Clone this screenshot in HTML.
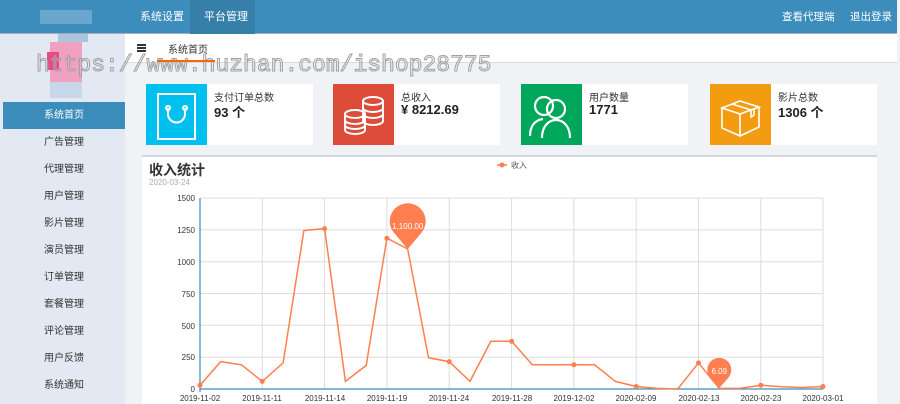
<!DOCTYPE html>
<html><head><meta charset="utf-8"><style>
*{margin:0;padding:0;box-sizing:border-box}
body{width:900px;height:404px;overflow:hidden;background:#f0f2f5;font-family:"Liberation Sans","Noto Sans CJK SC",sans-serif;position:relative}
.hd{position:absolute;left:0;top:0;width:897px;height:34px;background:#3c8dbc;border-bottom:1px solid #aab}
.hd span{position:absolute;top:0;line-height:34px;color:#fff;font-size:11px}
.side{position:absolute;left:0;top:34px;width:125px;height:370px;background:#e3e9f3}
.side div{position:absolute;left:3px;width:122px;height:27px;line-height:27px;text-align:center;font-size:10px;color:#333}
.side .on{background:#3c8dbc;color:#fff}
.tab{position:absolute;left:125px;top:34px;width:772px;height:29px;background:#fff;border-bottom:1px solid #ddd}
.card{position:absolute;top:84px;width:167px;height:61px;background:#fff}
.card .ic{position:absolute;left:0;top:0;width:61px;height:61px}
.card .t{position:absolute;left:68px;top:5px;font-size:10px;color:#333}
.card .n{position:absolute;left:68px;top:18px;font-size:13px;font-weight:bold;color:#222}
.wm{position:absolute;left:36px;top:52px;font-family:"Liberation Mono",monospace;font-size:23px;color:rgba(255,255,255,.15);-webkit-text-stroke:1px #a0a0a0;white-space:nowrap}
</style></head><body>
<div class="hd">
<div style="position:absolute;left:190px;top:0;width:65px;height:34px;background:#367fa9"></div>
<span style="left:140px">系统设置</span><span style="left:204px">平台管理</span>
<span style="left:782px;font-size:10.5px">查看代理端</span><span style="left:850px;font-size:10.5px">退出登录</span>
<div style="position:absolute;left:40px;top:10px;width:52px;height:14px;background:#7eb2d6;opacity:.7"></div>
</div>
<div class="side">
<div style="left:58px;top:0;width:30px;height:8px;background:#a9c6dc"></div>
<div style="left:50px;top:8px;width:32px;height:40px;background:#f0a0c0"></div>
<div style="left:47px;top:18px;width:12px;height:18px;background:#e84a85"></div>
<div style="left:50px;top:48px;width:32px;height:16px;background:#c8d8ea"></div>
<div class="on" style="top:68px">系统首页</div>
<div style="top:95px">广告管理</div>
<div style="top:122px">代理管理</div>
<div style="top:149px">用户管理</div>
<div style="top:176px">影片管理</div>
<div style="top:203px">演员管理</div>
<div style="top:230px">订单管理</div>
<div style="top:257px">套餐管理</div>
<div style="top:284px">评论管理</div>
<div style="top:311px">用户反馈</div>
<div style="top:338px">系统通知</div>
</div>
<div class="tab">
<div style="position:absolute;left:12px;top:10px;width:9px;height:1.5px;background:#333;box-shadow:0 3px 0 #333,0 6px 0 #333"></div>
<span style="position:absolute;left:43px;top:7px;font-size:10px;color:#333">系统首页</span>
</div>
<div class="card" style="left:146px"><div class="ic" style="background:#00c0ef"><svg width="61" height="61"><path d="M12 10H49V55H12Z M22 22a2 2 0 1 0 .1 0 M39 22a2 2 0 1 0 .1 0 M22 24v6a8.5 8.5 0 0 0 17 0v-6" fill="none" stroke="#fff" stroke-width="2"/></svg></div><div class="t">支付订单总数</div><div class="n">93 个</div></div>
<div class="card" style="left:333px"><div class="ic" style="background:#dd4b39"><svg width="61" height="61" fill="none" stroke="#fff" stroke-width="2"><ellipse cx="40" cy="17" rx="10" ry="4"/><path d="M30 17v20M50 17v20a10 4 0 0 1-20 0M30 24a10 4 0 0 0 20 0M30 30a10 4 0 0 0 20 0"/><ellipse cx="22" cy="30" rx="10" ry="4"/><path d="M12 30v16a10 4 0 0 0 20 0V30M12 36a10 4 0 0 0 20 0M12 41a10 4 0 0 0 20 0"/></svg></div><div class="t">总收入</div><div class="n">¥ 8212.69</div></div>
<div class="card" style="left:521px"><div class="ic" style="background:#00a65a"><svg width="61" height="61" fill="none" stroke="#fff" stroke-width="2.2"><circle cx="23" cy="22" r="9"/><circle cx="35" cy="25" r="9"/><path d="M9 52c0-10 5-16 13-17M21 54c0-11 6-18 14-18s14 7 14 18"/></svg></div><div class="t">用户数量</div><div class="n">1771</div></div>
<div class="card" style="left:710px"><div class="ic" style="background:#f39c12"><svg width="61" height="61" fill="none" stroke="#fff" stroke-width="1.6"><path d="M12 24L30 17 49 23 30 30ZM12 24v20l18 8V30M49 23v20l-19 9M22 20l19 6v7l3-2v-6"/></svg></div><div class="t">影片总数</div><div class="n">1306 个</div></div>
<div style="position:absolute;left:142px;top:155px;width:735px;height:249px;background:#fff;border-top:2px solid #d2d6de"></div>
<div style="position:absolute;left:149px;top:160px;font-size:14px;font-weight:bold;color:#333">收入统计</div>
<div style="position:absolute;left:149px;top:178px;font-size:8px;color:#aaa">2020-03-24</div>
<svg style="position:absolute;left:0;top:0" width="900" height="404" font-family="Liberation Sans" font-size="8" fill="#333">
<g stroke="#ddd" stroke-width="1">
<path d="M200 198H823M200 229.9H823M200 261.7H823M200 293.5H823M200 325.3H823M200 357.2H823"/>
<path d="M262.3 198V389M324.6 198V389M386.9 198V389M449.2 198V389M511.6 198V389M573.9 198V389M636.2 198V389M698.5 198V389M760.8 198V389M823 198V389"/>
</g>
<path d="M200 198V392M200 389H823" stroke="#3c8dbc" stroke-width="1.2"/>
<g text-anchor="end"><text x="195" y="201">1500</text><text x="195" y="233">1250</text><text x="195" y="265">1000</text><text x="195" y="297">750</text><text x="195" y="329">500</text><text x="195" y="360">250</text><text x="195" y="392">0</text></g>
<g text-anchor="middle"><text x="200" y="401">2019-11-02</text><text x="262" y="401">2019-11-11</text><text x="325" y="401">2019-11-14</text><text x="387" y="401">2019-11-19</text><text x="449" y="401">2019-11-24</text><text x="512" y="401">2019-11-28</text><text x="574" y="401">2019-12-02</text><text x="636" y="401">2020-02-09</text><text x="699" y="401">2020-02-13</text><text x="761" y="401">2020-02-23</text><text x="823" y="401">2020-03-01</text></g>
<polyline fill="none" stroke="#ff7f50" stroke-width="1.5" points="200,385.2 220.8,361.6 241.5,364.8 262.3,381.4 283.1,362.9 303.9,230.5 324.6,228.6 345.4,381.4 366.2,365.4 386.9,238.2 407.7,249 428.5,357.8 449.2,361.6 470,381.4 490.8,341.3 511.6,341.3 532.3,364.8 553.1,364.8 573.9,364.8 594.6,364.8 615.4,381.4 636.2,386.5 656.9,388.4 677.7,389 698.5,362.9 719.3,388.4 740,388.4 760.8,385.2 781.6,386.7 802.3,387.5 823,386.5"/>
<g fill="#ff7f50"><circle cx="200" cy="385.2" r="2.5"/><circle cx="262.3" cy="381.4" r="2.5"/><circle cx="324.6" cy="228.6" r="2.5"/><circle cx="386.9" cy="238.2" r="2.5"/><circle cx="449.2" cy="361.6" r="2.5"/><circle cx="511.6" cy="341.3" r="2.5"/><circle cx="573.9" cy="364.8" r="2.5"/><circle cx="636.2" cy="386.5" r="2.5"/><circle cx="698.5" cy="362.9" r="2.5"/><circle cx="760.8" cy="385.2" r="2.5"/><circle cx="823" cy="386.5" r="2.5"/>
<path d="M407.7 249L395 234A18 18 0 1 1 420.4 234Z"/>
<path d="M719.3 388L710.5 378A12 12 0 1 1 728.1 378Z"/>
<path d="M497 165h10" stroke="#ff7f50" stroke-width="1.5"/><circle cx="502" cy="165" r="2.5"/></g>
<text x="407.7" y="229" fill="#fff" text-anchor="middle" font-size="8">1,100.00</text>
<text x="719.3" y="374" fill="#fff" text-anchor="middle" font-size="8">6.09</text>
<text x="511" y="168" fill="#555">收入</text>
</svg>
<div class="wm">https://www.huzhan.com/ishop28775</div>
<div style="position:absolute;left:157px;top:60px;width:58px;height:2px;background:#f60"></div>
</body></html>
